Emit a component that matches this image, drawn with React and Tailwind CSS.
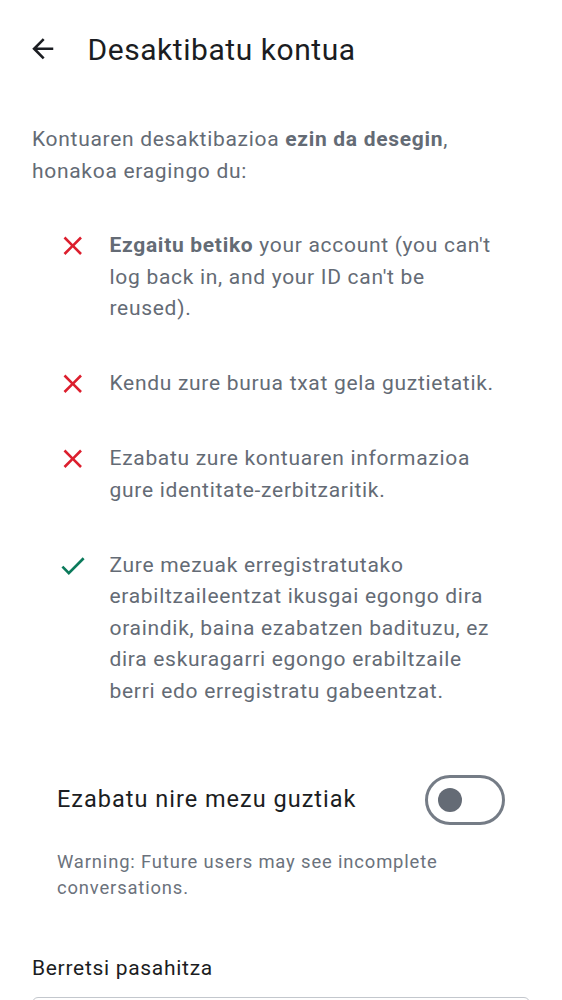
import React from "react";

const Close = () => (
  <svg width="31.5" height="31.5" viewBox="0 0 24 24" className="shrink-0" fill="#dc1f2e">
    <path d="M19 6.41L17.59 5 12 10.59 6.41 5 5 6.41 10.59 12 5 17.59 6.41 19 12 13.41 17.59 19 19 17.59 13.41 12z" />
  </svg>
);

const Check = () => (
  <svg width="31.5" height="31.5" viewBox="0 0 24 24" className="shrink-0" fill="#0b7a5b">
    <path d="M9 16.17L4.83 12l-1.42 1.41L9 19 21 7l-1.41-1.41z" />
  </svg>
);

const Item = ({ icon, children }) => (
  <div className="flex items-start gap-[21px]">
    {icon}
    <div className="text-[21px] leading-[31.5px] tracking-[0.7px] text-[#646b75]">{children}</div>
  </div>
);

export default function App() {
  return (
    <div className="min-h-[1000px] bg-white" style={{ fontFamily: "Roboto, 'Noto Sans', sans-serif" }}>
      <div className="flex h-[98px] items-center pl-[27px]">
        <svg width="31.5" height="31.5" viewBox="0 0 24 24" fill="#1b1d22">
          <path d="M20 11H7.83l5.59-5.59L12 4l-8 8 8 8 1.41-1.41L7.83 13H20v-2z" />
        </svg>
        <h1 className="ml-[29px] text-[30px] font-normal tracking-[0.55px] text-[#1b1d22]">Desaktibatu kontua</h1>
      </div>

      <p className="mt-[26px] px-[32px] text-[21px] leading-[31.5px] tracking-[0.7px] text-[#646b75]">
        Kontuaren desaktibazioa <span className="font-bold">ezin da desegin</span>,<br />
        honakoa eragingo du:
      </p>

      <div className="mt-[43px] flex flex-col gap-[43.5px] pl-[57px] pr-[57px]">
        <Item icon={<Close />}>
          <span className="font-bold">Ezgaitu betiko</span> your account (you can't log back in, and your ID can't be reused).
        </Item>
        <Item icon={<Close />}>Kendu zure burua txat gela guztietatik.</Item>
        <Item icon={<Close />}>Ezabatu zure kontuaren informazioa gure identitate-zerbitzaritik.</Item>
        <Item icon={<Check />}>
          Zure mezuak erregistratutako erabiltzaileentzat ikusgai egongo dira oraindik, baina ezabatzen badituzu, ez dira eskuragarri egongo erabiltzaile berri edo erregistratu gabeentzat.
        </Item>
      </div>

      <div className="mt-[68px] flex items-center justify-between px-[57px]">
        <span className="text-[23.5px] tracking-[1px] text-[#1b1d22]">Ezabatu nire mezu guztiak</span>
        <div className="flex h-[50px] w-[80px] items-center rounded-full border-[3px] border-[#757c86] pl-[10px]">
          <div className="h-[24px] w-[24px] rounded-full bg-[#646b75]" />
        </div>
      </div>

      <p className="mt-[24px] pl-[57px] pr-[100px] text-[18.4px] leading-[26px] tracking-[0.85px] text-[#6b727c]">
        Warning: Future users may see incomplete conversations.
      </p>

      <div className="mt-[54px] px-[32px]">
        <div className="text-[21px] leading-[26px] tracking-[0.7px] text-[#1b1d22]">Berretsi pasahitza</div>
        <div className="mt-[16px] h-[60px] rounded-[6px] border border-[#c3c7cd]" />
      </div>
    </div>
  );
}
